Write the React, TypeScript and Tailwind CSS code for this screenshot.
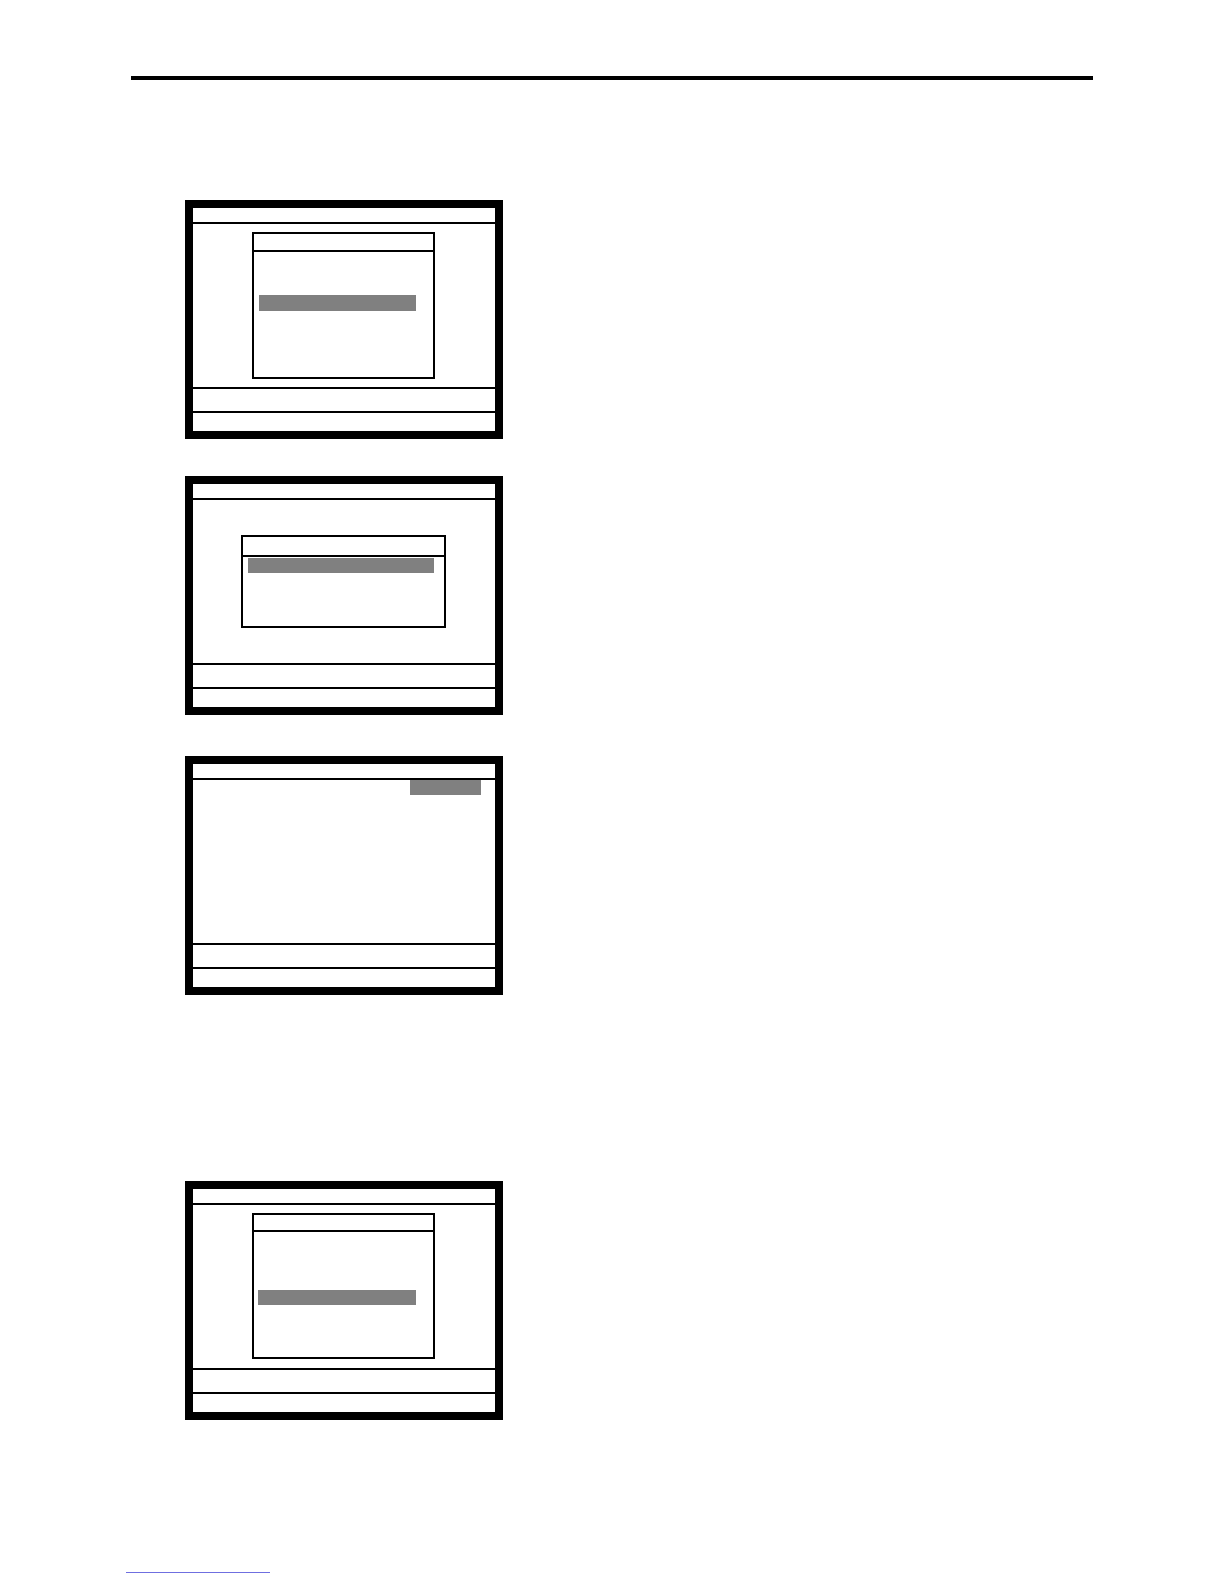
import React from "react";

function Panel({ mt, children }: { mt: string; children: React.ReactNode }) {
  return (
    <div
      className={`${mt} ml-[185px] w-[318px] h-[239px] border-[8px] border-black bg-white flex flex-col shrink-0`}
    >
      <div className="h-[14px] shrink-0" />
      <div className="h-[2px] bg-black shrink-0" />
      <div className="h-[163px] shrink-0 flex flex-col">{children}</div>
      <div className="h-[2px] bg-black shrink-0" />
      <div className="h-[22px] shrink-0" />
      <div className="h-[2px] bg-black shrink-0" />
      <div className="flex-1" />
    </div>
  );
}

export default function App() {
  return (
    <div
      className="w-[1224px] h-[1584px] bg-white flex flex-col overflow-hidden"
      style={{ fontFamily: '"Liberation Sans", Arial, sans-serif' }}
    >
      <div className="mt-[76px] ml-[131px] w-[962px] h-[4px] bg-black shrink-0" />

      <Panel mt="mt-[120px]">
        <div className="mt-[8px] ml-[59px] w-[183px] h-[147px] border-2 border-black flex flex-col">
          <div className="h-[18px] border-b-2 border-black shrink-0" />
          <div className="mt-[43px] ml-[5px] w-[157px] h-[16px] bg-[#808080]" />
        </div>
      </Panel>

      <Panel mt="mt-[37px]">
        <div className="mt-[35px] ml-[48px] w-[205px] h-[93px] border-2 border-black flex flex-col">
          <div className="h-[20px] border-b-2 border-black shrink-0" />
          <div className="mt-[1px] ml-[5px] w-[186px] h-[15px] bg-[#808080]" />
        </div>
      </Panel>

      <Panel mt="mt-[41px]">
        <div className="ml-[217px] w-[71px] h-[15px] bg-[#808080]" />
      </Panel>

      <Panel mt="mt-[186px]">
        <div className="mt-[8px] ml-[59px] w-[183px] h-[146px] border-2 border-black flex flex-col">
          <div className="h-[17px] border-b-2 border-black shrink-0" />
          <div className="mt-[58px] ml-[4px] w-[158px] h-[15px] bg-[#808080]" />
        </div>
      </Panel>

      <div className="mt-[152px] ml-[126px] w-[144px] h-[1px] bg-[#6f6fe0] shrink-0" />
    </div>
  );
}
